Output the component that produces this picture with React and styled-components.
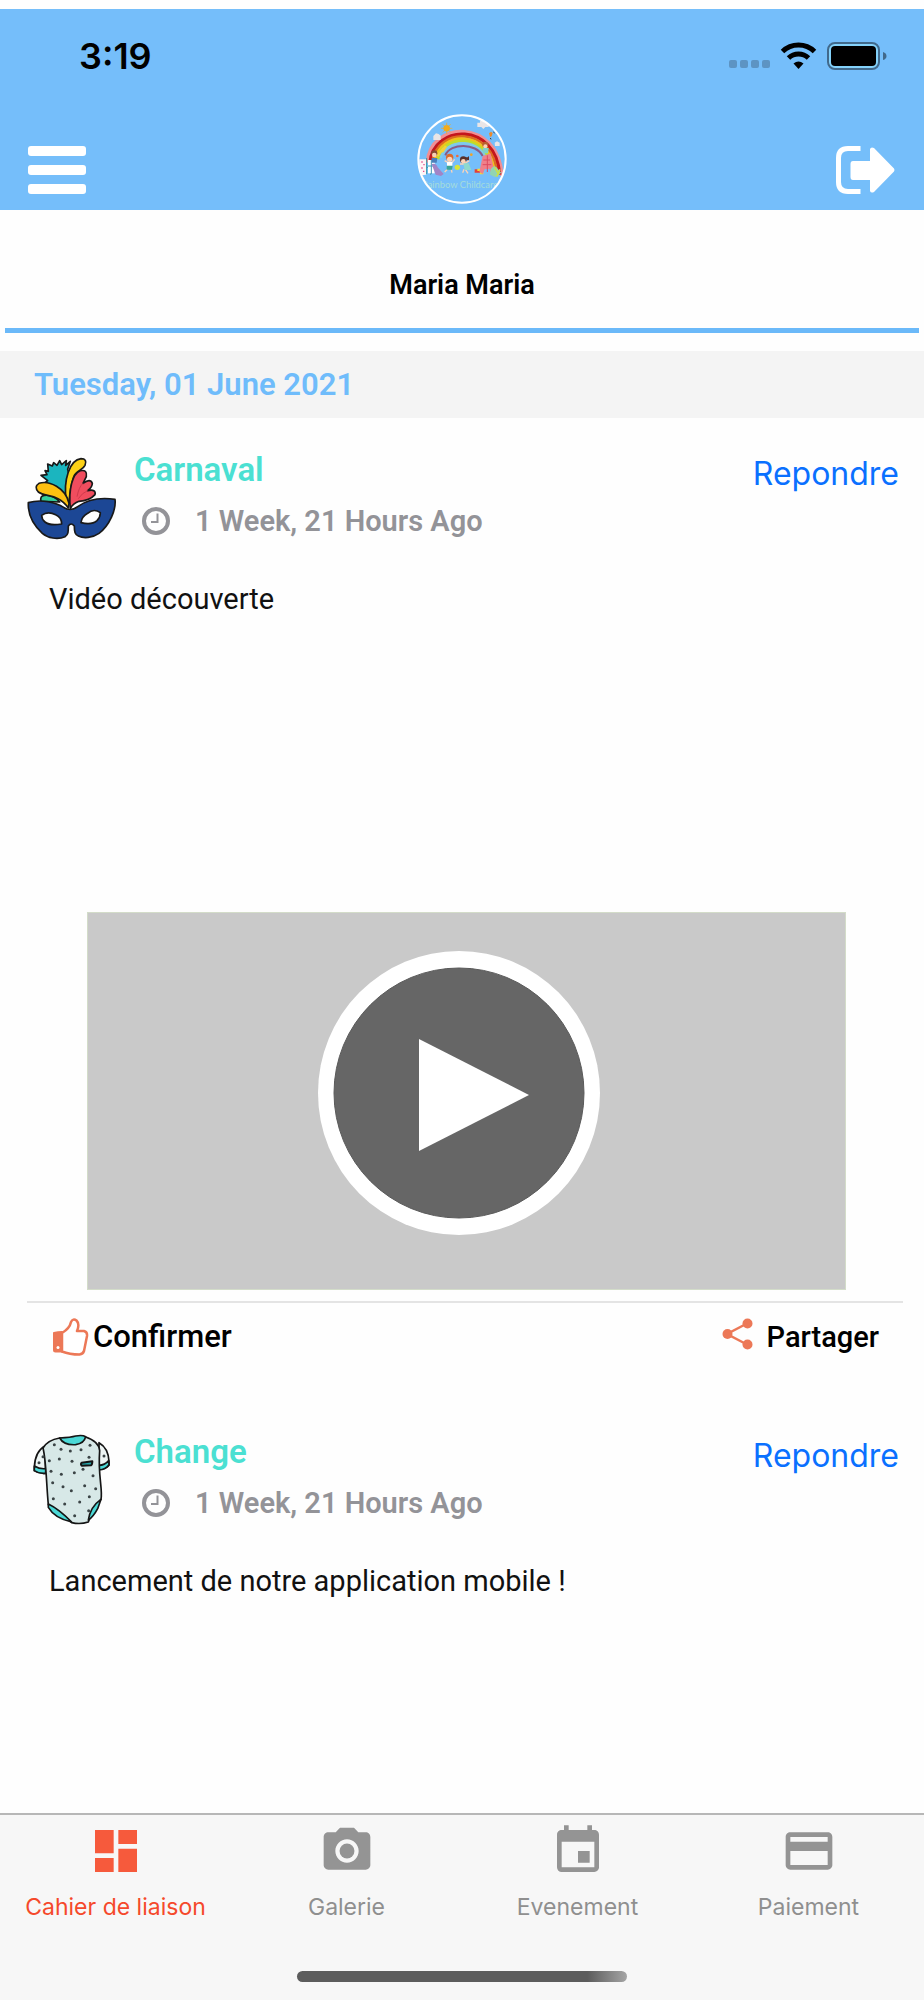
import React from "react";
import styled, { createGlobalStyle } from "styled-components";
import { MdDashboard, MdCameraAlt, MdEvent, MdPayment } from "react-icons/md";

const GlobalStyle = createGlobalStyle`
  * {
    box-sizing: border-box;
  }

  body {
    margin: 0;
    background: #fefefe;
    font-family: Roboto, sans-serif;
  }

  button {
    border: 0;
    padding: 0;
    background: none;
    font: inherit;
    color: inherit;
    cursor: pointer;
  }

  svg {
    display: block;
    flex: none;
  }
`;

const Page = styled.div`
  display: flex;
  flex-direction: column;
  min-height: 100vh;
  padding-top: 9px;
`;

const Header = styled.header`
  background: #75befa;
`;

const StatusBar = styled.div`
  display: flex;
  align-items: center;
  justify-content: space-between;
  height: 93px;
  padding: 0 37px 0 79px;
`;

const Time = styled.span`
  font-family: Inter, sans-serif;
  font-size: 36px;
  font-weight: 600;
  color: #000;
`;

const Nav = styled.nav`
  display: grid;
  grid-template-columns: 1fr auto 1fr;
  align-items: end;
  height: 108px;
  padding: 0 28px;
`;

const NavButton = styled.button`
  display: flex;
  align-items: center;
  justify-self: ${props => (props.$end ? "end" : "start")};
  height: 80px;
`;

const Logo = styled.div`
  margin-bottom: 6px;
`;

const ChildName = styled.h1`
  margin: 0 5px 18px;
  padding: 55px 0 23px;
  border-bottom: 5px solid #6bb9f9;
  font-size: 27px;
  font-weight: 600;
  line-height: 40px;
  text-align: center;
  color: #000;
`;

const DateBand = styled.h2`
  margin: 0;
  padding: 14px 34px 13px;
  background: #f4f4f4;
  font-size: 31px;
  font-weight: 600;
  line-height: 40px;
  color: #6fbcfb;
`;

const Feed = styled.main`
  flex: 1;
`;

const Post = styled.article`
  padding: 32px 0 43px;
`;

const PostHead = styled.div`
  display: flex;
  align-items: flex-start;
  gap: 17px;
  padding: 0 25px 0 27px;
`;

const PostInfo = styled.div`
  display: flex;
  flex: 1;
  flex-direction: column;
  gap: 11px;
`;

const PostTitle = styled.h3`
  margin: 0;
  font-size: 33px;
  font-weight: 600;
  line-height: 40px;
  color: #4be0d2;
`;

const PostTime = styled.div`
  display: flex;
  align-items: center;
  gap: 25px;
  padding-left: 8px;
  font-size: 29px;
  font-weight: 600;
  line-height: 40px;
  color: #939398;
`;

const ReplyButton = styled.button`
  font-family: Inter, sans-serif;
  font-size: 32px;
  line-height: 48px;
  color: #0a70ff;
`;

const PostText = styled.p`
  margin: 33px 49px 0;
  font-size: 29px;
  line-height: 40px;
  color: #111;
`;

const Video = styled.button`
  display: flex;
  align-items: center;
  justify-content: center;
  width: calc(100% - 165px);
  height: 378px;
  margin: 293px 78px 0 87px;
  padding: 0 16px 16px 0;
  border: 1px solid #d3dcc9;
  background: #c9c9c9;
`;

const Actions = styled.div`
  display: flex;
  justify-content: space-between;
  margin: 11px 21px 0 27px;
  padding: 14px 24px 0;
  border-top: 2px solid #e4e4e4;
`;

const ActionButton = styled.button`
  display: flex;
  align-items: center;
  gap: ${props => props.$gap}px;
  font-size: ${props => props.$size}px;
  font-weight: 500;
  line-height: 40px;
  color: #000;
`;

const TabBar = styled.footer`
  border-top: 2px solid #b7b7b7;
  background: #f7f7f7;
`;

const Tabs = styled.nav`
  display: grid;
  grid-template-columns: repeat(4, 1fr);
`;

const Tab = styled.a`
  display: flex;
  flex-direction: column;
  align-items: center;
  gap: 14px;
  padding-top: 8px;
  font-family: Inter, sans-serif;
  font-size: 23px;
  line-height: 28px;
  text-decoration: none;
  color: ${props => (props.$active ? "#f5492b" : "#8f8f8f")};

  svg {
    color: ${props => (props.$active ? "#f65a3c" : "#949494")};
  }
`;

const HomeIndicator = styled.div`
  width: 330px;
  height: 11px;
  margin: 50px auto 18px;
  border-radius: 6px;
  background: linear-gradient(to right, #5c5c5c 0%, #5c5c5c 88%, #a5a5a5 100%);
`;

const StatusIcons = () => (
  <svg width="160" height="30" viewBox="0 0 160 30">
    <g fill="#5d94c3">
      <rect x="2" y="19" width="8" height="8" rx="2" />
      <rect x="13" y="19" width="8" height="8" rx="2" />
      <rect x="24" y="19" width="8" height="8" rx="2" />
      <rect x="35" y="19" width="8" height="8" rx="2" />
    </g>
    <g fill="none" stroke="#000" strokeWidth="5">
      <path d="M55.5 10.5a23 23 0 0 1 32 0" />
      <path d="M61.5 17a14.5 14.5 0 0 1 20 0" />
    </g>
    <path d="M66.5 22.5a8 8 0 0 1 10 0l-5 5.5z" fill="#000" />
    <rect x="101" y="2" width="51" height="26" rx="7" fill="#84d2fb" stroke="#41698b" strokeWidth="2" />
    <rect x="104" y="5" width="45" height="20" rx="4" fill="#000" />
    <path d="M156 11q3.500 1 3.500 4t-3.500 4z" fill="#41698b" />
  </svg>
);

const MenuIcon = () => (
  <svg width="58" height="48" viewBox="0 0 58 48" fill="#fff">
    <rect width="58" height="10" rx="3" />
    <rect y="19" width="58" height="10" rx="3" />
    <rect y="38" width="58" height="10" rx="3" />
  </svg>
);

const LogoutIcon = () => (
  <svg width="60" height="48" viewBox="0 0 60 48" fill="#fff">
    <path
      d="M22 2.500H12Q2.500 2.500 2.500 12v24q0 9.500 9.500 9.500h10"
      fill="none"
      stroke="#fff"
      strokeWidth="5"
      strokeLinecap="square"
    />
    <path d="M17 15h17V3q1-2.500 4-1l20 20.500q1 1.500 0 3L38 46q-3 1.500-4-1V34H17q-2.500 0-2.500-3V18q0-3 2.500-3z" />
  </svg>
);

const LogoArt = () => (
  <svg width="90" height="90" viewBox="51 40 270 270" role="img" aria-label="Rainbow Childcare">
    <clipPath id="logo-clip">
      <circle cx="186" cy="175" r="130" />
    </clipPath>
    <g clipPath="url(#logo-clip)">
      <g fill="none">
        <path d="M82 186C88 60 296 50 306 226" stroke="#f28f93" strokeWidth="10" />
        <path d="M90 186C100 70 288 62 299 222" stroke="#c4161c" strokeWidth="10" />
        <path d="M98 184C108 80 280 72 291 220" stroke="#dd6b1f" strokeWidth="8" />
        <path d="M106 180C118 90 270 84 283 214" stroke="#f0c419" strokeWidth="8" />
        <path d="M114 176C126 100 260 96 274 204" stroke="#bfdc2c" strokeWidth="9" />
        <path d="M122 172C136 112 250 108 262 190" stroke="#7fcbe8" strokeWidth="7" />
        <path d="M136 164C152 126 228 126 248 166" stroke="#8a5c86" strokeWidth="6" />
      </g>
      <g stroke="#f2ac1c" strokeWidth="2">
        <path d="M140 66v34M123 83h34M128 71l24 24M128 95l24-24" />
        <circle cx="140" cy="83" r="9" fill="#f2ac1c" />
      </g>
      <path d="M232 66h8v-5h18v6h8v12h-10l-6 6-6-6h-12z" fill="#e9e5e6" />
      <path d="M100 106l8-8 8 2 6 5v13h-22zM284 126l7-4 8 4v10h-14z" fill="#e9e5e6" />
      <path d="M267 98l6-5 5 4-3 10-5 2z" fill="#ef8a2b" />
      <path d="M280 94l4 3M271 112l2 4" stroke="#333" strokeWidth="3" />
      <path d="M58 176h20v46l-12 2-8-20z" fill="#fdf3f6" />
      <path d="M64 184h4M70 192h4M64 202h4M69 212h4" stroke="#e24b87" strokeWidth="4" />
      <path d="M80 172v48M92 178v44M80 200h22" stroke="#3a9aa5" strokeWidth="3" />
      <rect x="84" y="178" width="20" height="40" fill="#fff" />
      <path d="M84 196h20M94 178v42" stroke="#3f97b8" strokeWidth="3" />
      <path d="M95 190q14-4 18 10l18 20-8 6-16-4z" fill="#a184c6" />
      <path d="M112 166l20-24M126 154l12-18" stroke="#f4cf3a" strokeWidth="8" />
      <circle cx="103" cy="158" r="9" fill="#874a32" />
      <circle cx="103" cy="163" r="7" fill="#f8cfb2" />
      <path d="M95 172h17l-2 14h-15z" fill="#4a7fbb" />
      <circle cx="149" cy="170" r="11" fill="#db6a2c" />
      <circle cx="149" cy="176" r="8" fill="#fbd3b8" />
      <path d="M134 180l10 6h12l8-10M144 204l-10 10M154 206l2 10" stroke="#fbd3b8" strokeWidth="4" fill="none" />
      <path d="M141 184h16v12h-16z" fill="#fff" />
      <path d="M140 195h18l-2 12h-16z" fill="#3ba595" />
      <circle cx="172" cy="200" r="8" fill="#d8e43a" />
      <circle cx="172" cy="166" r="4" fill="#ef6a3c" />
      <circle cx="190" cy="177" r="10" fill="#59302a" />
      <path d="M185 170h18l4-4v14z" fill="#59302a" />
      <circle cx="190" cy="182" r="7" fill="#fbd3b8" />
      <path d="M180 190h10l18-10M196 206l8 12M192 206l-4 10" stroke="#fbd3b8" strokeWidth="4" fill="none" />
      <path d="M190 188h16l8 20h-20z" fill="#8fd9cd" />
      <circle cx="214" cy="162" r="4" fill="#f4a326" />
      <path d="M224 206h24v10h-24z" fill="#e34138" />
      <path d="M232 204h8v7h-8zM240 214h10v7h-10z" fill="#f4dc31" />
      <path d="M248 166l24-8 12 60-12-4-4-10-14 2-6 14-10-6z" fill="#f0808a" />
      <path d="M250 178h20M248 192h26M262 164v50" stroke="#dd4b60" strokeWidth="3" />
      <circle cx="256" cy="132" r="9" fill="#b9602e" />
      <circle cx="256" cy="137" r="6" fill="#fbd3b8" />
      <path d="M248 142h18l-2 16h-15z" fill="#7fd2c7" />
      <path d="M272 206q12-18 22 0l10 10-18 14-16-8z" fill="#91d4b2" />
      <path d="M284 200l12 22M300 206l-10 22" stroke="#c9df4c" strokeWidth="5" />
      <text x="180" y="262" fill="#a4dcda" fontFamily="Lato, sans-serif" fontSize="28" textAnchor="middle">
        Rainbow Childcare
      </text>
    </g>
    <circle cx="186" cy="175" r="131" fill="none" stroke="#fff" strokeWidth="6" />
  </svg>
);

const MaskIcon = () => (
  <svg width="90" height="96" viewBox="36 30 270 288" stroke="#191919" strokeWidth="5" strokeLinejoin="round">
    <path d="M78 184q-4-16 10-18 26-4 46 20z" fill="#35cf9b" />
    <path d="M150 180C126 158 108 140 90 128l8-6-20-16 18-2-6-12 10 2-2-22 14 6 4-10 10 8 8-14 6 12 14-12-2 14 14-12-8 24q14 40 0 84z" fill="#1bb5bf" />
    <path d="M154 182C144 120 164 60 198 56q20 0 12 20c-6 14-28 16-34 34-8 22-12 50-14 80z" fill="#fcd116" />
    <path d="M160 204C130 160 92 172 70 156q-14-16 2-26c30-10 80 14 90 60z" fill="#fdc010" />
    <path d="M166 206C160 150 172 100 196 92q22-4 18 18l-10 20q22-16 28 0 0 12-14 22 26-6 22 12-16 18-48 20-18 6-26 22z" fill="#f04d5e" />
    <path d="M186 170q6-30 18-40M190 176q12-18 28-24" stroke="#cf3a4c" strokeWidth="3" fill="none" />
    <path
      d="M40 188c40-12 84 0 106 14q20 14 42-2c22-16 58-30 112-22 4 30-16 78-48 102-20 14-46 16-62 8-10-4-12-12-12-30q-10-12-18 0c0 18 0 26-10 32-22 10-52 4-68-10-28-26-44-54-42-92z"
      fill="#1c4795"
    />
    <path d="M80 226q18-14 42-2 18 8 18 28-36 6-50-6-10-8-10-20z" fill="#fff" />
    <path d="M256 218q-20-14-38 2-18 10-20 28 32 8 48-6 10-10 10-24z" fill="#fff" />
  </svg>
);

const dots = [
  [118, 74], [138, 88], [166, 93], [198, 89], [225, 76], [103, 122], [133, 117], [171, 124],
  [222, 112], [204, 148], [108, 154], [139, 163], [178, 158], [234, 167], [113, 188], [144, 200],
  [169, 212], [209, 197], [242, 206], [115, 236], [149, 252], [194, 246], [223, 230], [179, 287],
  [221, 272], [72, 128], [84, 110], [267, 108]
];

const BodysuitIcon = () => (
  <svg width="90" height="96" viewBox="36 36 270 288" stroke="#151515" strokeWidth="5" strokeLinejoin="round">
    <path d="M90 78q-30 16-32 64v10q14 10 34 8z" fill="#eef5f4" />
    <path d="M58 138q16 10 34 8v14q-20 2-34-8z" fill="#4bd8d6" />
    <path d="M252 68q28 16 30 56v12q-10 12-30 12z" fill="#eef5f4" />
    <path d="M281 122q-12 14-29 14v14q20-2 30-16z" fill="#4bd8d6" />
    <path
      d="M134 54Q98 60 84 84c10 40 10 110 16 170q28 14 70 54 26 6 50-2 14-44 38-68c6-30-10-70-4-146q-2-28-44-42-40 24-76 4z"
      fill="#d7e8e7"
    />
    <path d="M134 54q34-2 48-6 20-4 30 2-4 20-30 24-36 2-48-20z" fill="#4bd8d6" />
    <path d="M100 252q30 14 70 54-52-12-70-44z" fill="#4bd8d6" />
    <path d="M258 238q-32 22-38 62 14-8 28-34z" fill="#4bd8d6" />
    <path d="M200 128l32-4q0 10-4 12l-28 1q-4-5 0-9z" fill="#27a9ad" strokeWidth="6" />
    <g fill="#3b4446" stroke="none">
      {dots.map(([x, y]) => (
        <circle key={`${x}-${y}`} cx={x} cy={y} r="4.500" />
      ))}
    </g>
  </svg>
);

const ClockIcon = () => (
  <svg width="28" height="40" viewBox="0 0 28 40" fill="none" stroke="#939398">
    <circle cx="14" cy="20" r="12" strokeWidth="4" />
    <path d="M15.500 12.500v8.500H9" strokeWidth="2" />
  </svg>
);

const PlayIcon = () => (
  <svg width="282" height="284" viewBox="0 0 282 284">
    <ellipse cx="141" cy="142" rx="141" ry="142" fill="#fff" />
    <circle cx="141" cy="142" r="125" fill="#666" stroke="#5a5a5a" strokeWidth="1" />
    <path d="M101 88l110 56-110 56z" fill="#fff" />
  </svg>
);

const ThumbIcon = () => (
  <svg width="38" height="38" viewBox="0 0 38 38" stroke="#ec7857" strokeWidth="2" strokeLinejoin="round">
    <path d="M3 15q4-1 8-1v19.500H4.500Q3 33.500 3 32z" fill="#ec7857" />
    <path
      d="M11 15c5-3 8-6 9-11q2-4 5.500-1.500Q29 6 26 13h7q3.500 1 3 5l-3 15q-1 3-4.500 3.500-10 0-17.500-3z"
      fill="#fff"
      strokeWidth="2.500"
    />
    <circle cx="7" cy="29.500" r="1.500" fill="#fff" stroke="none" />
  </svg>
);

const ShareIcon = () => (
  <svg width="31" height="38" viewBox="0 0 31 38" fill="#ec7857">
    <path d="M25 5.500L5 16l20 10.500" fill="none" stroke="#ec7857" strokeWidth="2.500" />
    <circle cx="25.500" cy="5.500" r="5" />
    <circle cx="5.500" cy="16" r="5" />
    <circle cx="25.500" cy="26.500" r="5" />
  </svg>
);

const posts = [
  { id: 1, title: "Carnaval", time: "1 Week, 21 Hours Ago", text: "Vidéo découverte", Icon: MaskIcon, video: true },
  { id: 2, title: "Change", time: "1 Week, 21 Hours Ago", text: "Lancement de notre application mobile !", Icon: BodysuitIcon }
];

const tabs = [
  { label: "Cahier de liaison", Icon: MdDashboard },
  { label: "Galerie", Icon: MdCameraAlt },
  { label: "Evenement", Icon: MdEvent },
  { label: "Paiement", Icon: MdPayment }
];

class App extends React.Component {
  constructor(props) {
    super(props);
    this.state = {
      active: 0
    };
  }

  selectTab = (e, index) => {
    e.preventDefault();
    this.setState({ active: index });
  };

  render() {
    return (
      <Page>
        <GlobalStyle />
        <Header>
          <StatusBar>
            <Time>3:19</Time>
            <StatusIcons />
          </StatusBar>
          <Nav>
            <NavButton aria-label="Menu">
              <MenuIcon />
            </NavButton>
            <Logo>
              <LogoArt />
            </Logo>
            <NavButton $end aria-label="Déconnexion">
              <LogoutIcon />
            </NavButton>
          </Nav>
        </Header>

        <Feed>
          <ChildName>Maria Maria</ChildName>
          <DateBand>Tuesday, 01 June 2021</DateBand>
          {posts.map(({ id, title, time, text, Icon, video }) => (
            <Post key={id}>
              <PostHead>
                <Icon />
                <PostInfo>
                  <PostTitle>{title}</PostTitle>
                  <PostTime>
                    <ClockIcon />
                    <span>{time}</span>
                  </PostTime>
                </PostInfo>
                <ReplyButton>Repondre</ReplyButton>
              </PostHead>
              <PostText>{text}</PostText>
              {video && (
                <>
                  <Video aria-label="Lire la vidéo">
                    <PlayIcon />
                  </Video>
                  <Actions>
                    <ActionButton $gap={4} $size={31}>
                      <ThumbIcon />
                      Confirmer
                    </ActionButton>
                    <ActionButton $gap={14} $size={29}>
                      <ShareIcon />
                      Partager
                    </ActionButton>
                  </Actions>
                </>
              )}
            </Post>
          ))}
        </Feed>

        <TabBar>
          <Tabs>
            {tabs.map(({ label, Icon }, index) => (
              <Tab
                key={label}
                href="#"
                $active={this.state.active === index}
                onClick={e => this.selectTab(e, index)}
              >
                <Icon size={56} />
                {label}
              </Tab>
            ))}
          </Tabs>
          <HomeIndicator />
        </TabBar>
      </Page>
    );
  }
}

export default App;
